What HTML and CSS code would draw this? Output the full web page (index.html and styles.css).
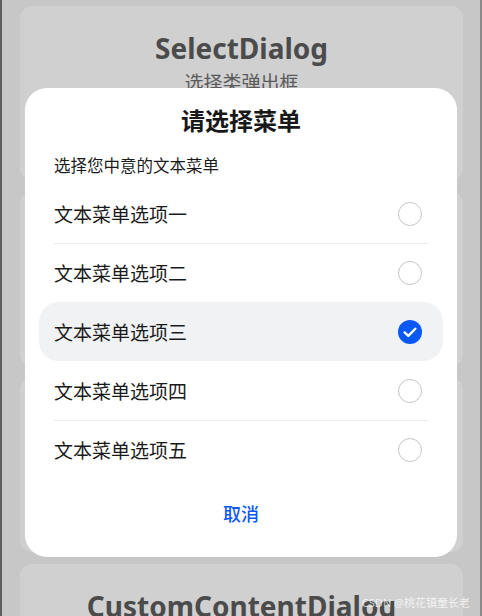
FILE: index.html
```html
<!DOCTYPE html>
<html lang="zh">
<head>
<meta charset="utf-8">
<title>SelectDialog</title>
<link rel="stylesheet" href="styles.css">
</head>
<body>
<div class="screen">
  <div class="list">
    <div class="card">
      <div class="card-title">SelectDialog</div>
      <div class="card-sub">选择类弹出框</div>
    </div>
    <div class="card"></div>
    <div class="card"></div>
    <div class="card">
      <div class="card-title">CustomContentDialog</div>
    </div>
  </div>

  <div class="dialog">
    <div class="dlg-title">请选择菜单</div>
    <div class="dlg-sub">选择您中意的文本菜单</div>
    <div class="options">
      <div class="opt"><span class="opt-text">文本菜单选项一</span><span class="radio"></span></div>
      <div class="opt"><span class="opt-text">文本菜单选项二</span><span class="radio"></span></div>
      <div class="opt selected"><span class="opt-text">文本菜单选项三</span>
        <svg class="check" width="24" height="24" viewBox="0 0 24 24"><circle cx="12" cy="12" r="12" fill="#0a59f7"/><path d="M6.6 12.4 L10.3 15.9 L17.4 8.7" fill="none" stroke="#fff" stroke-width="2.3" stroke-linecap="round" stroke-linejoin="round"/></svg>
      </div>
      <div class="opt after-sel"><span class="opt-text">文本菜单选项四</span><span class="radio"></span></div>
      <div class="opt"><span class="opt-text">文本菜单选项五</span><span class="radio"></span></div>
    </div>
    <div class="cancel">取消</div>
  </div>

  <div class="watermark">CSDN @桃花镇童长老</div>
</div>
</body>
</html>
```
FILE: styles.css
```css
html, body {
  margin: 0;
  padding: 0;
}
body {
  width: 482px;
  height: 616px;
  overflow: hidden;
  font-family: "Noto Sans", "Noto Sans CJK SC", sans-serif;
}
.screen {
  position: relative;
  width: 482px;
  height: 616px;
  background: #c7c7c7;
  box-sizing: border-box;
  border-left: 2px solid #5e5e5e;
  border-right: 2px solid #8a8a8a;
  overflow: hidden;
}
.list {
  display: flex;
  flex-direction: column;
  gap: 12px;
  padding: 6px 17px 0 18px;
}
.card {
  height: 174px;
  flex: none;
  background: #d0d0d0;
  border-radius: 12px;
  display: flex;
  flex-direction: column;
  align-items: center;
  padding-top: 23px;
  box-sizing: border-box;
}
.card-title {
  font-family: "Noto Sans", sans-serif;
  font-weight: 700;
  font-size: 28px;
  line-height: 38px;
  color: #4b4b4b;
}
.card-sub {
  font-family: "Noto Sans CJK SC", sans-serif;
  font-size: 19px;
  line-height: 26px;
  color: #5a5a5a;
  margin-top: 2px;
}
.dialog {
  position: absolute;
  left: 23px;
  top: 88px;
  width: 432px;
  height: 469px;
  background: #ffffff;
  border-radius: 22px;
  box-sizing: border-box;
  padding: 16px 14px 0;
  display: flex;
  flex-direction: column;
  font-family: "Noto Sans CJK SC", sans-serif;
}
.dlg-title {
  text-align: center;
  font-size: 24px;
  font-weight: 700;
  line-height: 32px;
  color: #181818;
}
.dlg-sub {
  font-size: 16.5px;
  line-height: 22px;
  color: #1c1c1c;
  padding-left: 15px;
  margin-top: 18px;
}
.options {
  margin-top: 8px;
  display: flex;
  flex-direction: column;
}
.opt {
  position: relative;
  height: 59px;
  display: flex;
  align-items: center;
  justify-content: space-between;
  padding: 0 21px 0 15px;
  border-radius: 20px;
}
.opt + .opt::before {
  content: "";
  position: absolute;
  left: 15px;
  right: 15px;
  top: 0;
  height: 1px;
  background: #ebebeb;
}
.opt.selected {
  background: #f1f2f4;
}
.opt.selected::before,
.opt.after-sel::before {
  display: none;
}
.opt-text {
  font-size: 19px;
  font-weight: 400;
  color: #1a1a1a;
}
.radio {
  width: 24px;
  height: 24px;
  box-sizing: border-box;
  border: 1.5px solid #c6c6c6;
  border-radius: 50%;
}
.check {
  display: block;
}
.cancel {
  margin-top: 14px;
  height: 40px;
  display: flex;
  align-items: center;
  justify-content: center;
  font-size: 18px;
  font-weight: 500;
  color: #0a59f7;
}
.watermark {
  position: absolute;
  right: 10px;
  bottom: 6px;
  font-size: 11px;
  color: rgba(255, 255, 255, 0.75);
  font-family: "Noto Sans", "Noto Sans CJK SC", sans-serif;
}
```
